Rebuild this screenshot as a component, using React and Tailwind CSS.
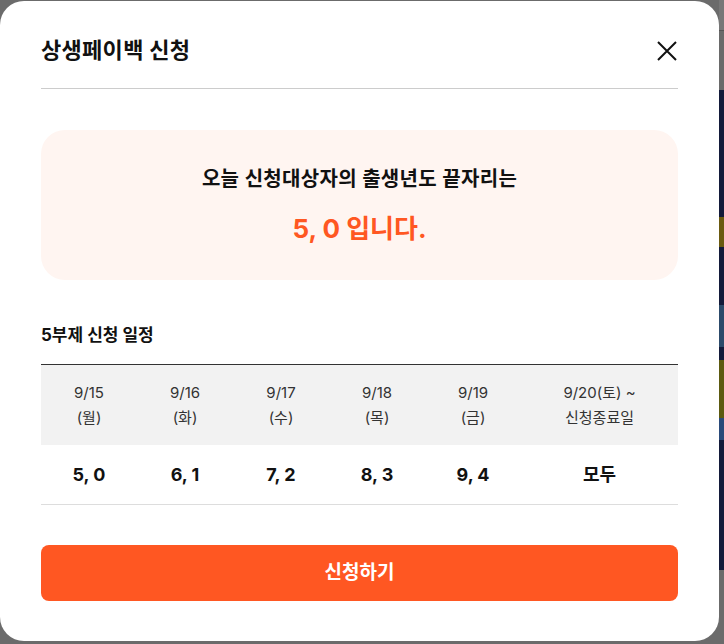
export default function App() {
  const days = [
    ["9/15", "(월)", "5, 0"],
    ["9/16", "(화)", "6, 1"],
    ["9/17", "(수)", "7, 2"],
    ["9/18", "(목)", "8, 3"],
    ["9/19", "(금)", "9, 4"],
  ];
  return (
    <div
      className="w-[724px] h-[644px] bg-[#6b6b6b] flex overflow-hidden"
      style={{ fontFamily: 'Inter, "Noto Sans CJK KR", sans-serif' }}
    >
      <div className="w-[719px] h-[640px] mt-[1px] shrink-0 bg-white rounded-[24px] px-[41px] flex flex-col">
        <div className="h-[88px] flex items-center justify-between border-b border-[#cccccc]">
          <h1 className="text-[22px] font-bold text-[#111] tracking-[0.3px] pt-[12px]">상생페이백 신청</h1>
          <svg width="22" height="22" viewBox="0 0 22 22" className="mt-[12px]">
            <path d="M2 2 L20 20 M20 2 L2 20" stroke="#111" strokeWidth="2" />
          </svg>
        </div>
        <div className="mt-[41px] h-[150px] rounded-[24px] bg-[#fff5f1] flex flex-col items-center justify-center">
          <p className="text-[20px] font-semibold text-[#111] tracking-[0.3px] leading-[26px]">
            오늘 신청대상자의 출생년도 끝자리는
          </p>
          <p className="text-[26px] font-bold text-[#ff5722] leading-[32px] mt-[21px]">
            5, 0 입니다.
          </p>
        </div>
        <h2 className="mt-[44px] text-[17px] font-bold text-[#111] leading-[22px]">5부제 신청 일정</h2>
        <div className="mt-[18px] border-t border-[#333] border-b border-b-[#dddddd]">
          <div className="flex h-[80px] bg-[#f2f2f2] items-center text-[15px] text-[#333] leading-[25px]">
            {days.map((d) => (
              <div key={d[0]} className="w-[96px] text-center">
                <div>{d[0]}</div>
                <div>{d[1]}</div>
              </div>
            ))}
            <div className="flex-1 text-center">
              <div>9/20(토) ~</div>
              <div>신청종료일</div>
            </div>
          </div>
          <div className="flex h-[59px] items-center text-[18px] font-bold text-[#111]">
            {days.map((d) => (
              <div key={d[0]} className="w-[96px] text-center">
                {d[2]}
              </div>
            ))}
            <div className="flex-1 text-center">모두</div>
          </div>
        </div>
        <button className="mt-[40px] h-[56px] rounded-[8px] bg-[#ff5722] text-white text-[19px] font-bold">
          신청하기
        </button>
      </div>
      <div className="flex-1 flex flex-col">
        <div className="h-[30px] bg-[#777777]" />
        <div className="h-[1px] bg-[#555]" />
        <div className="h-[59px] bg-[#6a6a6a]" />
        <div className="h-[127px] bg-[#131a3a]" />
        <div className="h-[30px] bg-[#6b5a10]" />
        <div className="h-[58px] bg-[#131a3a]" />
        <div className="h-[42px] bg-[#2c4a6a]" />
        <div className="h-[13px] bg-[#131a3a]" />
        <div className="h-[58px] bg-[#5c5a10]" />
        <div className="h-[22px] bg-[#2a4a7a]" />
        <div className="h-[130px] bg-[#131a3a]" />
        <div className="flex-1 bg-[#6b6b6b]" />
      </div>
    </div>
  );
}
